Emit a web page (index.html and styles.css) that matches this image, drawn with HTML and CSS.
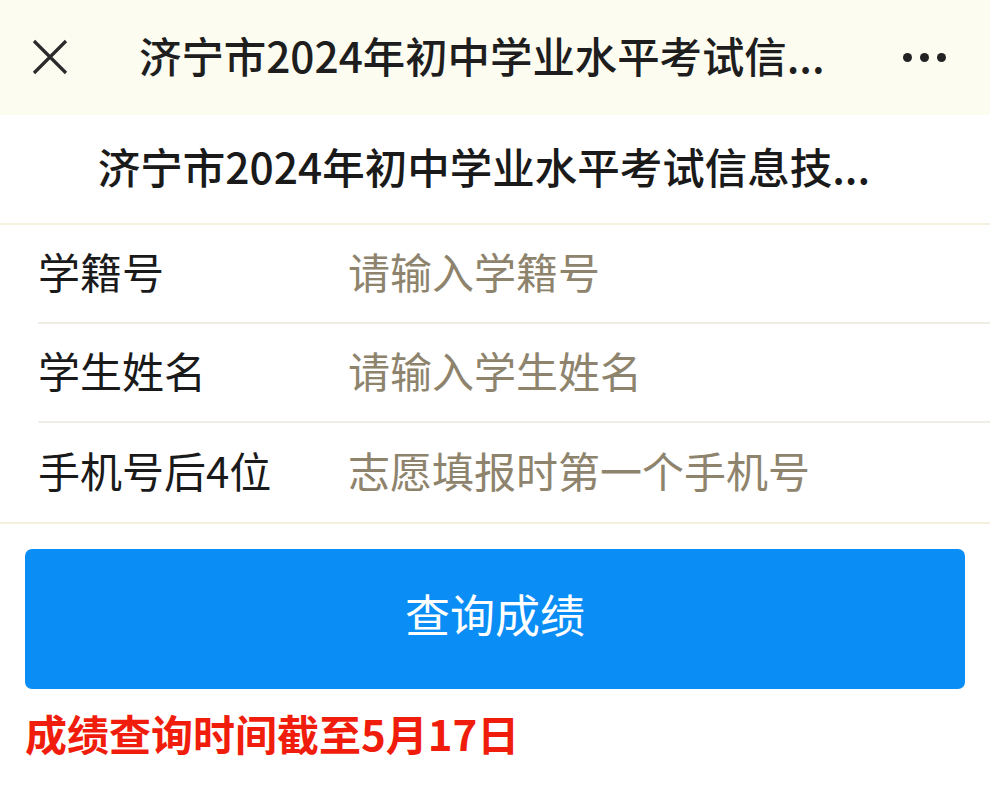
FILE: index.html
```html
<!DOCTYPE html>
<html lang="zh-CN">
<head>
<meta charset="utf-8">
<title>济宁市2024年初中学业水平考试信息技术成绩查询</title>
<link rel="stylesheet" href="styles.css">
</head>
<body>
<div class="page">
  <header class="topbar">
    <span class="close">
      <svg width="36" height="36" viewBox="0 0 36 36"><path d="M2 2 L34 34 M34 2 L2 34" stroke="#2b2b2b" stroke-width="3.2" fill="none"/></svg>
    </span>
    <span class="topbar-title">济宁市2024年初中学业水平考试信...</span>
    <span class="more"><i></i><i></i><i></i></span>
  </header>
  <div class="heading">济宁市2024年初中学业水平考试信息技...</div>
  <div class="form">
    <div class="row"><span class="label">学籍号</span><span class="ph">请输入学籍号</span></div>
    <div class="row"><span class="label">学生姓名</span><span class="ph">请输入学生姓名</span></div>
    <div class="row last"><span class="label">手机号后4位</span><span class="ph">志愿填报时第一个手机号</span></div>
  </div>
  <div class="actions">
    <button class="btn">查询成绩</button>
    <p class="notice">成绩查询时间截至5月17日</p>
  </div>
</div>
</body>
</html>
```
FILE: styles.css
```css
* { box-sizing: border-box; }
html, body { margin: 0; padding: 0; background: #ffffff; }
body {
  font-family: "Noto Sans CJK SC", "Noto Sans", sans-serif;
  color: #1c1c1c;
  width: 990px;
  height: 800px;
  overflow: hidden;
}
.topbar {
  height: 115px;
  background: #fcfcf1;
  display: flex;
  align-items: center;
  padding: 0 44px 6px 32px;
}
.close { width: 36px; height: 36px; display: flex; margin-top: 4px; }
.topbar-title {
  margin-left: 71px;
  font-size: 42.4px;
  font-weight: 500;
  color: #1e1e1e;
  flex: 1;
  white-space: nowrap;
}
.more { display: flex; gap: 8px; margin-top: 6px; }
.more i { width: 9px; height: 9px; border-radius: 50%; background: #222; display: block; }
.heading {
  height: 110px;
  border-bottom: 2px solid #f4f0dc;
  display: flex;
  align-items: center;
  justify-content: center;
  font-size: 42.5px;
  font-weight: 500;
  color: #1a1a1a;
  padding-bottom: 8px;
  padding-right: 22px;
  white-space: nowrap;
}
.form { padding-left: 38px; border-bottom: 2px solid #f4f0dc; }
.row {
  height: 99px;
  display: flex;
  align-items: center;
  border-bottom: 2px solid #efede4;
  padding-bottom: 6px;
}
.row.last { border-bottom: none; }
.label {
  width: 310px;
  font-size: 42px;
  color: #1a1a1a;
}
.ph {
  font-size: 42px;
  color: #8e846d;
}
.actions { padding: 25px 25px 0 25px; }
.btn {
  display: block;
  width: 940px;
  height: 140px;
  border: none;
  border-radius: 7px;
  background: #0b8df6;
  color: #ffffff;
  font-family: inherit;
  font-size: 45px;
  padding: 0 0 12px 0;
}
.notice {
  margin: 20px 0 0 0;
  font-size: 42px;
  font-weight: 700;
  color: #f01d0c;
  line-height: 48px;
}
```
